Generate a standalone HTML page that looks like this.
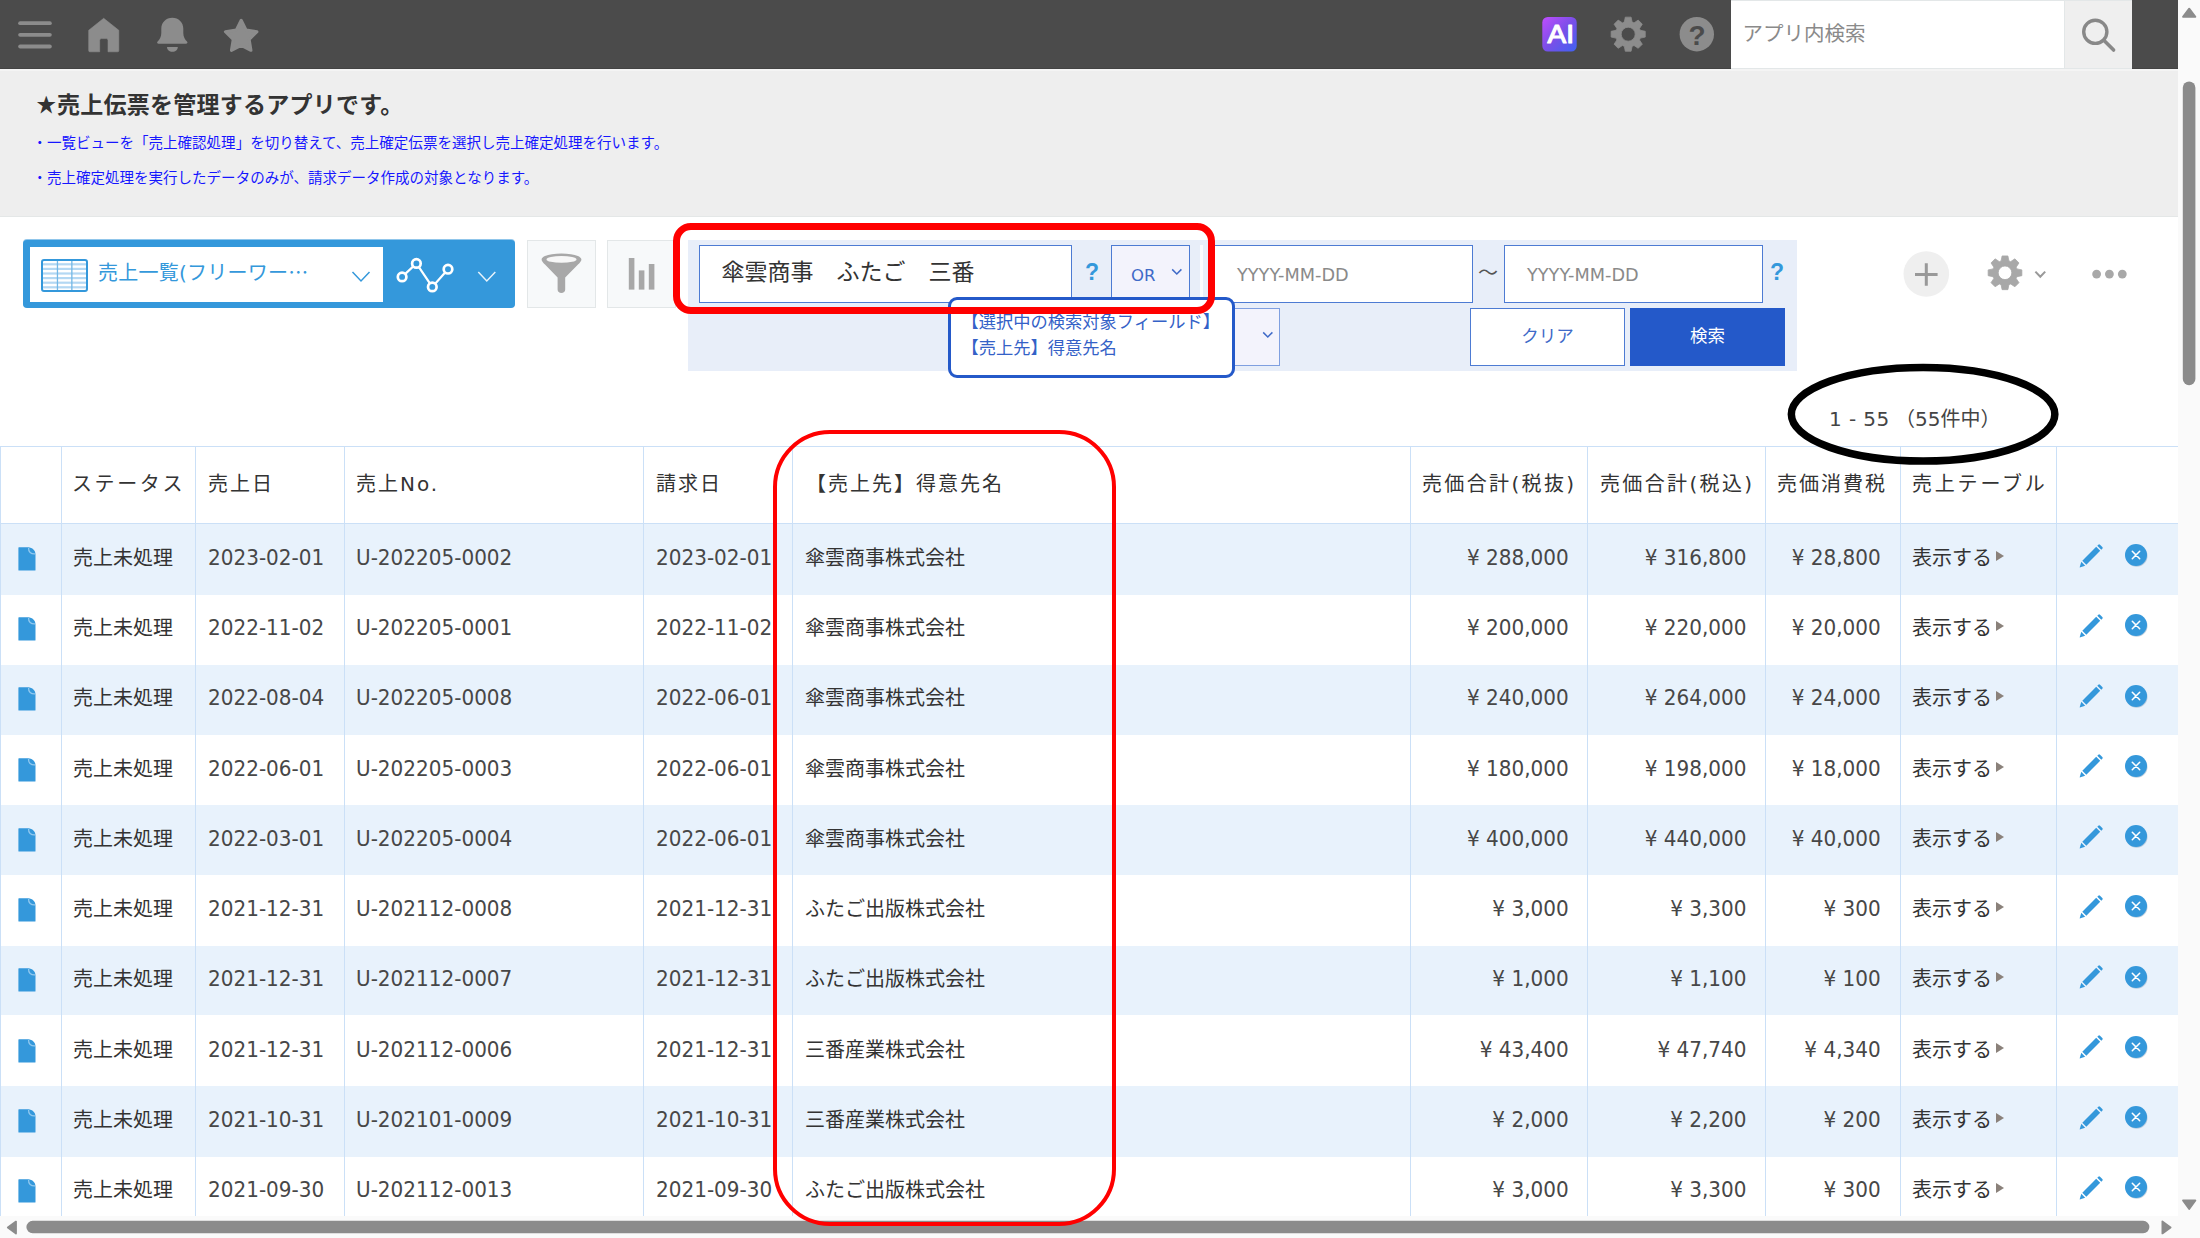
<!DOCTYPE html>
<html lang="ja">
<head>
<meta charset="utf-8">
<title>売上伝票</title>
<style>
*{box-sizing:border-box;margin:0;padding:0}
html,body{width:2200px;height:1238px;overflow:hidden;background:#fff}
body{font-family:"DejaVu Sans", "Liberation Sans", "Noto Sans CJK JP", sans-serif;color:#333;font-size:20px}
#page{position:relative;width:2200px;height:1238px;overflow:hidden;background:#fff}
.abs{position:absolute}
svg{display:block}

/* ---------- top bar ---------- */
#topbar{position:absolute;left:0;top:0;width:2178px;height:69px;background:#4b4b4b;border-bottom:1px solid #434343}
#topbar svg{position:absolute}
#srch{position:absolute;left:1731px;top:0;width:333px;height:69px;background:#fff;border-top:1px solid #e3e7e8;border-bottom:1px solid #e3e7e8;font-size:20.5px;color:#8a8a8a;line-height:66px;padding-left:11.5px}
#srchbtn{position:absolute;left:2064px;top:0;width:68px;height:69px;background:#efefef;border-top:1px solid #e3e7e8;border-bottom:1px solid #e3e7e8;border-left:1px solid #e3e7e8}

/* ---------- scrollbars ---------- */
#vsb{position:absolute;left:2178px;top:0;width:22px;height:1238px;background:#fafafa}
#vsb .th{position:absolute;left:5px;top:81px;width:12px;height:303px;border-radius:6px;background:#8b8b8b}
#hsb{position:absolute;left:0;top:1216px;width:2178px;height:22px;background:#fafafa}
#hsb .th{position:absolute;left:27px;top:5px;width:2123px;height:12px;border-radius:6px;background:#8b8b8b}

/* ---------- announcement ---------- */
#ann{position:absolute;left:0;top:69px;width:2178px;height:148px;background:#eee;border-top:2px solid #f4f4f4;border-bottom:1px solid #e4e7e7}
#ann h1{position:absolute;left:36px;top:13.5px;font-size:23px;letter-spacing:.25px;line-height:40px;font-weight:bold;color:#333;white-space:nowrap;font-family:"Liberation Sans", "Noto Sans CJK JP", sans-serif}
#ann h1 b{display:inline-block;width:21px;font-size:19.5px;vertical-align:1px;text-align:center}
#ann p{position:absolute;left:36px;font-size:14.53px;line-height:24px;color:#1616ff;margin-left:-3.6px;white-space:nowrap;font-family:"Liberation Sans", "Noto Sans CJK JP", sans-serif}

/* ---------- toolbar ---------- */
#viewsel{position:absolute;left:23px;top:240px;width:492px;height:68px;background:#3498db;border-radius:4px;box-shadow:0 -1px 0 rgba(52,152,219,.55)}
#viewsel .in{position:absolute;left:7px;top:7px;width:353px;height:55px;background:#fff}
#viewsel .nm{position:absolute;left:68px;top:0;width:240px;line-height:50px;font-size:20px;letter-spacing:.25px;color:#3498db;white-space:nowrap;overflow:hidden}
.gbtn{position:absolute;top:240px;width:69px;height:68px;background:#f7f9fa;border:1px solid #e3e7e8}
.gbtn svg{position:absolute}

#panel{position:absolute;left:688px;top:240px;width:1109px;height:131px;background:#e8eef9}
.bx{position:absolute;border:1px solid #4d7bd3;background:#fff}
.q{position:absolute;font-family:"Liberation Sans", "Noto Sans CJK JP", sans-serif;font-weight:bold;font-size:23px;line-height:30px;color:#3498db}
.ph{color:#8a8a8a;font-size:17.7px;line-height:58.5px;padding-left:22px;white-space:nowrap}
.sel{background:#f3f3fc}

/* ---------- table ---------- */
#tbl{position:absolute;left:0;top:0;width:2178px;height:1216px;overflow:hidden;pointer-events:none}
.rw{position:absolute;left:0;width:2178px;background:#fff}
.rw.odd{background:#e8f2fc}
.tr{position:absolute;left:0;width:2178px;height:26px}
.c{position:absolute;top:0;line-height:26px;font-size:20px;white-space:nowrap;color:#333}
.c.r{text-align:right}
.c.n{transform:translateY(-.7px) scaleY(1.08);transform-origin:50% 54%;color:#474747}
.c.ic{top:0}
.hd{position:absolute;left:0;width:2178px;background:#fff}
.h{position:absolute;top:25px;line-height:26px;font-size:20px;letter-spacing:2px;white-space:nowrap;color:#333}
.hl{position:absolute;left:0;width:2178px;height:1px;background:#cbe0f7}
.vl{position:absolute;top:446px;width:1px;height:770px;background:#cbe0f7}
.tri{display:inline-block;width:0;height:0;border-left:8px solid #8a817a;border-top:5.7px solid transparent;border-bottom:5.7px solid transparent;margin-left:3.6px;vertical-align:4px}
.doc{position:absolute;left:0;top:2px}
.pen{position:absolute;left:0;top:-1.2px}
.del{position:absolute;left:0;top:-.8px}
</style>
</head>
<body>
<div id="page">
<div id="topbar">
<svg width="2178" height="68" viewBox="0 0 2178 68" style="left:0;top:0">
<rect x="18.2" y="21.3" width="33.6" height="3.8" rx="1.9" fill="#8c8c8c"/><rect x="18.2" y="32.9" width="33.6" height="3.8" rx="1.9" fill="#8c8c8c"/><rect x="18.2" y="44.6" width="33.6" height="3.8" rx="1.9" fill="#8c8c8c"/><path d="M103.7 18.3 L118.8 30.3 V50.6 a1.2 1.2 0 0 1 -1.2 1.2 H108 V40.2 a1.6 1.6 0 0 0 -1.6 -1.6 H101.3 a1.6 1.6 0 0 0 -1.6 1.6 V51.8 H89.9 a1.2 1.2 0 0 1 -1.2 -1.2 V30.3 Z" fill="#8c8c8c" stroke="#8c8c8c" stroke-width="0.6" stroke-linejoin="round"/><path d="M172.3 17.8 C166 17.8 161.3 22.5 161.3 28.8 V33 C161.3 37 159.5 39.5 157.6 41.6 C156.6 42.7 157.3 43.8 158.6 43.8 H186 C187.3 43.8 188 42.7 187 41.6 C185.1 39.5 183.3 37 183.3 33 V28.8 C183.3 22.5 178.6 17.8 172.3 17.8 Z" fill="#8c8c8c"/><path d="M167 47 H177.8 C177.8 50 175.5 51.8 172.4 51.8 C169.3 51.8 167 50 167 47 Z" fill="#8c8c8c"/><path d="M241.20 20.30 L246.14 30.10 L256.99 31.77 L249.19 39.50 L250.96 50.33 L241.20 45.30 L231.44 50.33 L233.21 39.50 L225.41 31.77 L236.26 30.10Z" fill="#8c8c8c" stroke="#8c8c8c" stroke-width="3" stroke-linejoin="round"/><defs><linearGradient id="aig" x1="0" y1="0" x2="1" y2="1"><stop offset="0" stop-color="#c04dff"/><stop offset=".5" stop-color="#7a4fe8"/><stop offset="1" stop-color="#3f62f2"/></linearGradient></defs><rect x="1542.3" y="16.9" width="34.4" height="34.6" rx="5.5" fill="url(#aig)"/><text x="1547.5" y="43.4" font-family="Liberation Sans, sans-serif" font-size="25.5" fill="#fff" stroke="#fff" stroke-width="1.15" stroke-linejoin="round" textLength="26.4" lengthAdjust="spacingAndGlyphs">AI</text><path d="M1624.30 22.11L1625.30 17.14L1631.10 17.14L1632.10 22.11A12.7 12.7 0 0 1 1633.99 22.90L1638.21 20.09L1642.31 24.19L1639.50 28.41A12.7 12.7 0 0 1 1640.29 30.30L1645.26 31.30L1645.26 37.10L1640.29 38.10A12.7 12.7 0 0 1 1639.50 39.99L1642.31 44.21L1638.21 48.31L1633.99 45.50A12.7 12.7 0 0 1 1632.10 46.29L1631.10 51.26L1625.30 51.26L1624.30 46.29A12.7 12.7 0 0 1 1622.41 45.50L1618.19 48.31L1614.09 44.21L1616.90 39.99A12.7 12.7 0 0 1 1616.11 38.10L1611.14 37.10L1611.14 31.30L1616.11 30.30A12.7 12.7 0 0 1 1616.90 28.41L1614.09 24.19L1618.19 20.09L1622.41 22.90A12.7 12.7 0 0 1 1624.30 22.11ZM1621.20 34.2a7.0 7.0 0 1 0 14.0 0a7.0 7.0 0 1 0 -14.0 0Z" fill="#8c8c8c" fill-rule="evenodd" stroke="#8c8c8c" stroke-width="0.8" stroke-linejoin="round"/><circle cx="1696.8" cy="34.2" r="17.2" fill="#8c8c8c"/><text x="1697.1" y="45.3" text-anchor="middle" font-family="Liberation Sans, sans-serif" font-weight="bold" font-size="28" fill="#4b4b4b">?</text>
</svg>
<div id="srch">アプリ内検索</div>
<div id="srchbtn"><svg width="68" height="66" viewBox="0 0 68 66" style="left:0;top:0"><circle cx="30.3" cy="30.8" r="11.6" fill="none" stroke="#888" stroke-width="3.4"/><path d="M38.8 39.3 L48.6 49.1" stroke="#888" stroke-width="3.6" stroke-linecap="round"/></svg></div>
</div>
<div id="vsb"><svg class="abs" width="22" height="1238" viewBox="0 0 22 1238" style="left:0;top:0"><rect x="4.8" y="81.5" width="12.6" height="303.7" rx="6.3" fill="#8b8b8b"/><path d="M11.2 8.6 L17.4 16.8 H5 Z" fill="#8b8b8b" stroke="#8b8b8b" stroke-width="1.8" stroke-linejoin="round"/><path d="M11.2 1209 L17.4 1200.4 H5 Z" fill="#8b8b8b" stroke="#8b8b8b" stroke-width="1.8" stroke-linejoin="round"/></svg></div>
<div id="hsb"><svg class="abs" width="2178" height="22" viewBox="0 0 2178 22" style="left:0;top:0"><rect x="26.4" y="4.8" width="2123" height="12.5" rx="6.25" fill="#8b8b8b"/><path d="M7.8 11.6 L16 5.6 V17.6 Z" fill="#8b8b8b" stroke="#8b8b8b" stroke-width="1.8" stroke-linejoin="round"/><path d="M2170.6 11.4 L2162.4 5.4 V17.4 Z" fill="#8b8b8b" stroke="#8b8b8b" stroke-width="1.8" stroke-linejoin="round"/></svg></div>
<div id="ann"><h1><b>★</b>売上伝票を管理するアプリです。</h1>
<p style="top:60px">・一覧ビューを「売上確認処理」を切り替えて、売上確定伝票を選択し売上確定処理を行います。</p>
<p style="top:95px">・売上確定処理を実行したデータのみが、請求データ作成の対象となります。</p></div>
<div id="viewsel"><div class="in"><svg style="position:absolute;left:10.6px;top:11.6px" width="47" height="33" viewBox="0 0 47 33"><rect x="1" y="1" width="45" height="31" rx="2" fill="#fff" stroke="#3498db" stroke-width="2"/><rect x="2" y="4.2" width="43" height="2.2" fill="#b4d8f3"/><rect x="2" y="8.8" width="43" height="2.2" fill="#b4d8f3"/><rect x="2" y="13.4" width="43" height="2.2" fill="#b4d8f3"/><rect x="2" y="18.0" width="43" height="2.2" fill="#b4d8f3"/><rect x="2" y="22.6" width="43" height="2.2" fill="#b4d8f3"/><rect x="2" y="27.2" width="43" height="2.2" fill="#b4d8f3"/><rect x="15.8" y="2" width="1.3" height="29" fill="#74b8e6"/><rect x="30.2" y="2" width="1.3" height="29" fill="#74b8e6"/></svg><div class="nm">売上一覧(フリーワー<span style="font-family:'Noto Sans CJK JP',sans-serif">…</span></div><svg style="position:absolute;left:320px;top:22px" width="24" height="16" viewBox="0 0 24 16"><path d="M2.5 3 L11 12 L19.5 3" fill="none" stroke="#3498db" stroke-width="1.5"/></svg></div><svg style="position:absolute;left:0;top:0" width="492" height="68" viewBox="0 0 492 68"><path d="M379.1 36.9 L393.4 23.4 L409.3 46.9 L425.0 29.2" fill="none" stroke="#fff" stroke-width="2.2"/><circle cx="379.1" cy="36.9" r="4.3" fill="#3498db" stroke="#fff" stroke-width="2.7"/><circle cx="393.4" cy="23.4" r="4.3" fill="#3498db" stroke="#fff" stroke-width="2.7"/><circle cx="409.3" cy="46.9" r="4.3" fill="#3498db" stroke="#fff" stroke-width="2.7"/><circle cx="425.0" cy="29.2" r="4.3" fill="#3498db" stroke="#fff" stroke-width="2.7"/><path d="M455.3 32 L463.8 41 L472.3 32" fill="none" stroke="#fff" stroke-opacity=".88" stroke-width="1.5"/></svg></div>
<div class="gbtn" style="left:527px"><svg style="left:12px;top:12px" width="44" height="42" viewBox="0 0 44 42"><path d="M1.6 6.5 C1.6 3 10 0.6 21.4 0.6 C32.8 0.6 41.4 3 41.4 6.5 C41.4 8 40 9.6 38 11.6 L25.2 24.6 V36.6 C25.2 38.8 23.6 40 21.4 40 C19.2 40 17.6 38.8 17.6 36.6 V24.6 L5 11.6 C3 9.6 1.6 8 1.6 6.5 Z" fill="#a8a8a8"/><ellipse cx="21.5" cy="6.4" rx="15" ry="3.4" fill="#f7f7f7"/></svg></div>
<div class="gbtn" style="left:607px"><svg style="left:0;top:0" width="69" height="66" viewBox="0 0 69 66"><rect x="20.8" y="17" width="5.6" height="31.6" fill="#a8a8a8"/><rect x="30.8" y="29.4" width="5.6" height="19.2" fill="#a8a8a8"/><rect x="40.8" y="23" width="5.6" height="25.6" fill="#a8a8a8"/></svg></div>
<div id="panel"></div>
<div class="bx" style="left:699px;top:245px;width:373px;height:58px;font-size:23px;line-height:53px;padding-left:21.5px;white-space:nowrap;color:#333;font-family:'Liberation Sans','Noto Sans CJK JP',sans-serif">傘雲商事　ふたご　三番</div>
<div class="q" style="left:1085px;top:257px">?</div>
<div class="bx sel" style="left:1111px;top:245px;width:79px;height:58px;font-size:16.5px;line-height:60px;padding-left:19px;color:#3f6ac8">OR<svg style="position:absolute;left:59px;top:22px" width="12" height="8" viewBox="0 0 12 8"><path d="M1.2 1.4 L5.8 6 L10.4 1.4" fill="none" stroke="#3f6ac8" stroke-width="1.5"/></svg></div>
<div class="abs" style="left:1200px;top:245px;width:3px;height:58px;background:#fbfcfe"></div>
<div class="bx ph" style="left:1212px;top:245px;width:261px;height:58px;padding-left:24px">YYYY-MM-DD</div>
<div class="abs" style="left:1478px;top:258px;font-size:20px;line-height:30px;color:#555;font-family:'Liberation Sans','Noto Sans CJK JP',sans-serif">～</div>
<div class="bx ph" style="left:1504px;top:245px;width:259px;height:58px">YYYY-MM-DD</div>
<div class="q" style="left:1770px;top:257px">?</div>
<div class="bx sel" style="left:1100px;top:308px;width:180px;height:58px;border-color:#7f9fe0"><svg style="position:absolute;left:161px;top:22px" width="12" height="8" viewBox="0 0 12 8"><path d="M1.2 1.4 L5.8 6 L10.4 1.4" fill="none" stroke="#3f6ac8" stroke-width="1.5"/></svg></div>
<div class="bx" style="left:1470px;top:308px;width:155px;height:58px;text-align:center;font-size:17.5px;line-height:54px;color:#3f6ac8">クリア</div>
<div class="abs" style="left:1630px;top:308px;width:155px;height:58px;background:#2459c9;text-align:center;font-size:17.5px;line-height:56px;color:#fff">検索</div>
<svg class="abs" style="left:1890px;top:240px" width="270" height="70" viewBox="1890 240 270 70"><circle cx="1926.3" cy="274" r="22.8" fill="#efefef"/><path d="M1915 274.5 H1937.6 M1926.3 263.2 V285.8" stroke="#999" stroke-width="3" fill="none"/><path d="M2001.10 260.92L2002.10 255.95L2007.90 255.95L2008.90 260.92A12.5 12.5 0 0 1 2010.64 261.64L2014.87 258.83L2018.97 262.93L2016.16 267.16A12.5 12.5 0 0 1 2016.88 268.90L2021.85 269.90L2021.85 275.70L2016.88 276.70A12.5 12.5 0 0 1 2016.16 278.44L2018.97 282.67L2014.87 286.77L2010.64 283.96A12.5 12.5 0 0 1 2008.90 284.68L2007.90 289.65L2002.10 289.65L2001.10 284.68A12.5 12.5 0 0 1 1999.36 283.96L1995.13 286.77L1991.03 282.67L1993.84 278.44A12.5 12.5 0 0 1 1993.12 276.70L1988.15 275.70L1988.15 269.90L1993.12 268.90A12.5 12.5 0 0 1 1993.84 267.16L1991.03 262.93L1995.13 258.83L1999.36 261.64A12.5 12.5 0 0 1 2001.10 260.92ZM1998.20 272.8a6.8 6.8 0 1 0 13.6 0a6.8 6.8 0 1 0 -13.6 0Z" fill="#a8a8a8" fill-rule="evenodd" stroke="#a8a8a8" stroke-width="0.8" stroke-linejoin="round"/><path d="M2035.4 271.6 L2040.3 276.8 L2045.2 271.6" fill="none" stroke="#999" stroke-width="2"/><circle cx="2096.6" cy="274.1" r="4.4" fill="#a8a8a8"/><circle cx="2109.4" cy="274.1" r="4.4" fill="#a8a8a8"/><circle cx="2122.3" cy="274.1" r="4.4" fill="#a8a8a8"/></svg>
<div class="abs" style="left:1829px;top:405px;font-size:20px;line-height:28px;white-space:nowrap;color:#444"><span style="letter-spacing:.4px">1 - 55</span><span style="font-family:'Liberation Sans','Noto Sans CJK JP',sans-serif;margin-left:5.5px">（</span>55件中<span style="font-family:'Liberation Sans','Noto Sans CJK JP',sans-serif">）</span></div>
<div id="tbl">
<div class="rw odd" style="top:524px;height:71px"></div><div class="rw" style="top:595px;height:70px"></div><div class="rw odd" style="top:665px;height:70px"></div><div class="rw" style="top:735px;height:70px"></div><div class="rw odd" style="top:805px;height:70px"></div><div class="rw" style="top:875px;height:71px"></div><div class="rw odd" style="top:946px;height:69px"></div><div class="rw" style="top:1015px;height:71px"></div><div class="rw odd" style="top:1086px;height:71px"></div><div class="rw" style="top:1157px;height:59px"></div>
<div class="tr" style="top:545.00px"><span class="c ic" style="left:18px"><svg class="doc" viewBox="0 0 18 24" width="18" height="24"><path d="M0.9 0.3H10.2C14.4 0.6 17.5 3.4 17.5 7.4V23a.5.5 0 0 1-.5.5H.9a.5.5 0 0 1-.5-.5V.8a.5.5 0 0 1 .5-.5z" fill="#3498db"/><path d="M10.6 1C10.3 4.8 12.8 7.1 17 6.9" fill="none" stroke="#90c8ef" stroke-width="1.3"/></svg></span><span class="c" style="left:73px">売上未処理</span><span class="c n" style="left:208px">2023-02-01</span><span class="c n" style="left:356px">U-202205-0002</span><span class="c n" style="left:656px">2023-02-01</span><span class="c" style="left:805px">傘雲商事株式会社</span><span class="c r n" style="right:609.3px">¥ 288,000</span><span class="c r n" style="right:431.5px">¥ 316,800</span><span class="c r n" style="right:297.29999999999995px">¥ 28,800</span><span class="c" style="left:1912px">表示する<i class="tri"></i></span><span class="c ic" style="left:2079px"><svg class="pen" viewBox="0 0 24 24" width="24" height="24"><path d="M0.6 23.4l1.7-5.6 3.9 3.9z" fill="#3498db"/><path d="M3.3 16.7L17.2 2.8l4 4L7.3 20.7z" fill="#3498db"/><path d="M18.3 1.7l1-1a1.2 1.2 0 0 1 1.7 0l2.3 2.3a1.2 1.2 0 0 1 0 1.7l-1 1z" fill="#3498db"/></svg></span><span class="c ic" style="left:2125px"><svg class="del" viewBox="0 0 24 24" width="24" height="24"><circle cx="11.6" cy="11.9" r="10.9" fill="#8aa9c4" opacity=".55"/><circle cx="11" cy="11" r="11" fill="#3498db"/><path d="M7.3 7.3l7.4 7.4M14.7 7.3l-7.4 7.4" stroke="#fff" stroke-width="1.55" stroke-linecap="round"/></svg></span></div>
<div class="tr" style="top:615.22px"><span class="c ic" style="left:18px"><svg class="doc" viewBox="0 0 18 24" width="18" height="24"><path d="M0.9 0.3H10.2C14.4 0.6 17.5 3.4 17.5 7.4V23a.5.5 0 0 1-.5.5H.9a.5.5 0 0 1-.5-.5V.8a.5.5 0 0 1 .5-.5z" fill="#3498db"/><path d="M10.6 1C10.3 4.8 12.8 7.1 17 6.9" fill="none" stroke="#90c8ef" stroke-width="1.3"/></svg></span><span class="c" style="left:73px">売上未処理</span><span class="c n" style="left:208px">2022-11-02</span><span class="c n" style="left:356px">U-202205-0001</span><span class="c n" style="left:656px">2022-11-02</span><span class="c" style="left:805px">傘雲商事株式会社</span><span class="c r n" style="right:609.3px">¥ 200,000</span><span class="c r n" style="right:431.5px">¥ 220,000</span><span class="c r n" style="right:297.29999999999995px">¥ 20,000</span><span class="c" style="left:1912px">表示する<i class="tri"></i></span><span class="c ic" style="left:2079px"><svg class="pen" viewBox="0 0 24 24" width="24" height="24"><path d="M0.6 23.4l1.7-5.6 3.9 3.9z" fill="#3498db"/><path d="M3.3 16.7L17.2 2.8l4 4L7.3 20.7z" fill="#3498db"/><path d="M18.3 1.7l1-1a1.2 1.2 0 0 1 1.7 0l2.3 2.3a1.2 1.2 0 0 1 0 1.7l-1 1z" fill="#3498db"/></svg></span><span class="c ic" style="left:2125px"><svg class="del" viewBox="0 0 24 24" width="24" height="24"><circle cx="11.6" cy="11.9" r="10.9" fill="#8aa9c4" opacity=".55"/><circle cx="11" cy="11" r="11" fill="#3498db"/><path d="M7.3 7.3l7.4 7.4M14.7 7.3l-7.4 7.4" stroke="#fff" stroke-width="1.55" stroke-linecap="round"/></svg></span></div>
<div class="tr" style="top:685.44px"><span class="c ic" style="left:18px"><svg class="doc" viewBox="0 0 18 24" width="18" height="24"><path d="M0.9 0.3H10.2C14.4 0.6 17.5 3.4 17.5 7.4V23a.5.5 0 0 1-.5.5H.9a.5.5 0 0 1-.5-.5V.8a.5.5 0 0 1 .5-.5z" fill="#3498db"/><path d="M10.6 1C10.3 4.8 12.8 7.1 17 6.9" fill="none" stroke="#90c8ef" stroke-width="1.3"/></svg></span><span class="c" style="left:73px">売上未処理</span><span class="c n" style="left:208px">2022-08-04</span><span class="c n" style="left:356px">U-202205-0008</span><span class="c n" style="left:656px">2022-06-01</span><span class="c" style="left:805px">傘雲商事株式会社</span><span class="c r n" style="right:609.3px">¥ 240,000</span><span class="c r n" style="right:431.5px">¥ 264,000</span><span class="c r n" style="right:297.29999999999995px">¥ 24,000</span><span class="c" style="left:1912px">表示する<i class="tri"></i></span><span class="c ic" style="left:2079px"><svg class="pen" viewBox="0 0 24 24" width="24" height="24"><path d="M0.6 23.4l1.7-5.6 3.9 3.9z" fill="#3498db"/><path d="M3.3 16.7L17.2 2.8l4 4L7.3 20.7z" fill="#3498db"/><path d="M18.3 1.7l1-1a1.2 1.2 0 0 1 1.7 0l2.3 2.3a1.2 1.2 0 0 1 0 1.7l-1 1z" fill="#3498db"/></svg></span><span class="c ic" style="left:2125px"><svg class="del" viewBox="0 0 24 24" width="24" height="24"><circle cx="11.6" cy="11.9" r="10.9" fill="#8aa9c4" opacity=".55"/><circle cx="11" cy="11" r="11" fill="#3498db"/><path d="M7.3 7.3l7.4 7.4M14.7 7.3l-7.4 7.4" stroke="#fff" stroke-width="1.55" stroke-linecap="round"/></svg></span></div>
<div class="tr" style="top:755.66px"><span class="c ic" style="left:18px"><svg class="doc" viewBox="0 0 18 24" width="18" height="24"><path d="M0.9 0.3H10.2C14.4 0.6 17.5 3.4 17.5 7.4V23a.5.5 0 0 1-.5.5H.9a.5.5 0 0 1-.5-.5V.8a.5.5 0 0 1 .5-.5z" fill="#3498db"/><path d="M10.6 1C10.3 4.8 12.8 7.1 17 6.9" fill="none" stroke="#90c8ef" stroke-width="1.3"/></svg></span><span class="c" style="left:73px">売上未処理</span><span class="c n" style="left:208px">2022-06-01</span><span class="c n" style="left:356px">U-202205-0003</span><span class="c n" style="left:656px">2022-06-01</span><span class="c" style="left:805px">傘雲商事株式会社</span><span class="c r n" style="right:609.3px">¥ 180,000</span><span class="c r n" style="right:431.5px">¥ 198,000</span><span class="c r n" style="right:297.29999999999995px">¥ 18,000</span><span class="c" style="left:1912px">表示する<i class="tri"></i></span><span class="c ic" style="left:2079px"><svg class="pen" viewBox="0 0 24 24" width="24" height="24"><path d="M0.6 23.4l1.7-5.6 3.9 3.9z" fill="#3498db"/><path d="M3.3 16.7L17.2 2.8l4 4L7.3 20.7z" fill="#3498db"/><path d="M18.3 1.7l1-1a1.2 1.2 0 0 1 1.7 0l2.3 2.3a1.2 1.2 0 0 1 0 1.7l-1 1z" fill="#3498db"/></svg></span><span class="c ic" style="left:2125px"><svg class="del" viewBox="0 0 24 24" width="24" height="24"><circle cx="11.6" cy="11.9" r="10.9" fill="#8aa9c4" opacity=".55"/><circle cx="11" cy="11" r="11" fill="#3498db"/><path d="M7.3 7.3l7.4 7.4M14.7 7.3l-7.4 7.4" stroke="#fff" stroke-width="1.55" stroke-linecap="round"/></svg></span></div>
<div class="tr" style="top:825.88px"><span class="c ic" style="left:18px"><svg class="doc" viewBox="0 0 18 24" width="18" height="24"><path d="M0.9 0.3H10.2C14.4 0.6 17.5 3.4 17.5 7.4V23a.5.5 0 0 1-.5.5H.9a.5.5 0 0 1-.5-.5V.8a.5.5 0 0 1 .5-.5z" fill="#3498db"/><path d="M10.6 1C10.3 4.8 12.8 7.1 17 6.9" fill="none" stroke="#90c8ef" stroke-width="1.3"/></svg></span><span class="c" style="left:73px">売上未処理</span><span class="c n" style="left:208px">2022-03-01</span><span class="c n" style="left:356px">U-202205-0004</span><span class="c n" style="left:656px">2022-06-01</span><span class="c" style="left:805px">傘雲商事株式会社</span><span class="c r n" style="right:609.3px">¥ 400,000</span><span class="c r n" style="right:431.5px">¥ 440,000</span><span class="c r n" style="right:297.29999999999995px">¥ 40,000</span><span class="c" style="left:1912px">表示する<i class="tri"></i></span><span class="c ic" style="left:2079px"><svg class="pen" viewBox="0 0 24 24" width="24" height="24"><path d="M0.6 23.4l1.7-5.6 3.9 3.9z" fill="#3498db"/><path d="M3.3 16.7L17.2 2.8l4 4L7.3 20.7z" fill="#3498db"/><path d="M18.3 1.7l1-1a1.2 1.2 0 0 1 1.7 0l2.3 2.3a1.2 1.2 0 0 1 0 1.7l-1 1z" fill="#3498db"/></svg></span><span class="c ic" style="left:2125px"><svg class="del" viewBox="0 0 24 24" width="24" height="24"><circle cx="11.6" cy="11.9" r="10.9" fill="#8aa9c4" opacity=".55"/><circle cx="11" cy="11" r="11" fill="#3498db"/><path d="M7.3 7.3l7.4 7.4M14.7 7.3l-7.4 7.4" stroke="#fff" stroke-width="1.55" stroke-linecap="round"/></svg></span></div>
<div class="tr" style="top:896.10px"><span class="c ic" style="left:18px"><svg class="doc" viewBox="0 0 18 24" width="18" height="24"><path d="M0.9 0.3H10.2C14.4 0.6 17.5 3.4 17.5 7.4V23a.5.5 0 0 1-.5.5H.9a.5.5 0 0 1-.5-.5V.8a.5.5 0 0 1 .5-.5z" fill="#3498db"/><path d="M10.6 1C10.3 4.8 12.8 7.1 17 6.9" fill="none" stroke="#90c8ef" stroke-width="1.3"/></svg></span><span class="c" style="left:73px">売上未処理</span><span class="c n" style="left:208px">2021-12-31</span><span class="c n" style="left:356px">U-202112-0008</span><span class="c n" style="left:656px">2021-12-31</span><span class="c" style="left:805px">ふたご出版株式会社</span><span class="c r n" style="right:609.3px">¥ 3,000</span><span class="c r n" style="right:431.5px">¥ 3,300</span><span class="c r n" style="right:297.29999999999995px">¥ 300</span><span class="c" style="left:1912px">表示する<i class="tri"></i></span><span class="c ic" style="left:2079px"><svg class="pen" viewBox="0 0 24 24" width="24" height="24"><path d="M0.6 23.4l1.7-5.6 3.9 3.9z" fill="#3498db"/><path d="M3.3 16.7L17.2 2.8l4 4L7.3 20.7z" fill="#3498db"/><path d="M18.3 1.7l1-1a1.2 1.2 0 0 1 1.7 0l2.3 2.3a1.2 1.2 0 0 1 0 1.7l-1 1z" fill="#3498db"/></svg></span><span class="c ic" style="left:2125px"><svg class="del" viewBox="0 0 24 24" width="24" height="24"><circle cx="11.6" cy="11.9" r="10.9" fill="#8aa9c4" opacity=".55"/><circle cx="11" cy="11" r="11" fill="#3498db"/><path d="M7.3 7.3l7.4 7.4M14.7 7.3l-7.4 7.4" stroke="#fff" stroke-width="1.55" stroke-linecap="round"/></svg></span></div>
<div class="tr" style="top:966.32px"><span class="c ic" style="left:18px"><svg class="doc" viewBox="0 0 18 24" width="18" height="24"><path d="M0.9 0.3H10.2C14.4 0.6 17.5 3.4 17.5 7.4V23a.5.5 0 0 1-.5.5H.9a.5.5 0 0 1-.5-.5V.8a.5.5 0 0 1 .5-.5z" fill="#3498db"/><path d="M10.6 1C10.3 4.8 12.8 7.1 17 6.9" fill="none" stroke="#90c8ef" stroke-width="1.3"/></svg></span><span class="c" style="left:73px">売上未処理</span><span class="c n" style="left:208px">2021-12-31</span><span class="c n" style="left:356px">U-202112-0007</span><span class="c n" style="left:656px">2021-12-31</span><span class="c" style="left:805px">ふたご出版株式会社</span><span class="c r n" style="right:609.3px">¥ 1,000</span><span class="c r n" style="right:431.5px">¥ 1,100</span><span class="c r n" style="right:297.29999999999995px">¥ 100</span><span class="c" style="left:1912px">表示する<i class="tri"></i></span><span class="c ic" style="left:2079px"><svg class="pen" viewBox="0 0 24 24" width="24" height="24"><path d="M0.6 23.4l1.7-5.6 3.9 3.9z" fill="#3498db"/><path d="M3.3 16.7L17.2 2.8l4 4L7.3 20.7z" fill="#3498db"/><path d="M18.3 1.7l1-1a1.2 1.2 0 0 1 1.7 0l2.3 2.3a1.2 1.2 0 0 1 0 1.7l-1 1z" fill="#3498db"/></svg></span><span class="c ic" style="left:2125px"><svg class="del" viewBox="0 0 24 24" width="24" height="24"><circle cx="11.6" cy="11.9" r="10.9" fill="#8aa9c4" opacity=".55"/><circle cx="11" cy="11" r="11" fill="#3498db"/><path d="M7.3 7.3l7.4 7.4M14.7 7.3l-7.4 7.4" stroke="#fff" stroke-width="1.55" stroke-linecap="round"/></svg></span></div>
<div class="tr" style="top:1036.54px"><span class="c ic" style="left:18px"><svg class="doc" viewBox="0 0 18 24" width="18" height="24"><path d="M0.9 0.3H10.2C14.4 0.6 17.5 3.4 17.5 7.4V23a.5.5 0 0 1-.5.5H.9a.5.5 0 0 1-.5-.5V.8a.5.5 0 0 1 .5-.5z" fill="#3498db"/><path d="M10.6 1C10.3 4.8 12.8 7.1 17 6.9" fill="none" stroke="#90c8ef" stroke-width="1.3"/></svg></span><span class="c" style="left:73px">売上未処理</span><span class="c n" style="left:208px">2021-12-31</span><span class="c n" style="left:356px">U-202112-0006</span><span class="c n" style="left:656px">2021-12-31</span><span class="c" style="left:805px">三番産業株式会社</span><span class="c r n" style="right:609.3px">¥ 43,400</span><span class="c r n" style="right:431.5px">¥ 47,740</span><span class="c r n" style="right:297.29999999999995px">¥ 4,340</span><span class="c" style="left:1912px">表示する<i class="tri"></i></span><span class="c ic" style="left:2079px"><svg class="pen" viewBox="0 0 24 24" width="24" height="24"><path d="M0.6 23.4l1.7-5.6 3.9 3.9z" fill="#3498db"/><path d="M3.3 16.7L17.2 2.8l4 4L7.3 20.7z" fill="#3498db"/><path d="M18.3 1.7l1-1a1.2 1.2 0 0 1 1.7 0l2.3 2.3a1.2 1.2 0 0 1 0 1.7l-1 1z" fill="#3498db"/></svg></span><span class="c ic" style="left:2125px"><svg class="del" viewBox="0 0 24 24" width="24" height="24"><circle cx="11.6" cy="11.9" r="10.9" fill="#8aa9c4" opacity=".55"/><circle cx="11" cy="11" r="11" fill="#3498db"/><path d="M7.3 7.3l7.4 7.4M14.7 7.3l-7.4 7.4" stroke="#fff" stroke-width="1.55" stroke-linecap="round"/></svg></span></div>
<div class="tr" style="top:1106.76px"><span class="c ic" style="left:18px"><svg class="doc" viewBox="0 0 18 24" width="18" height="24"><path d="M0.9 0.3H10.2C14.4 0.6 17.5 3.4 17.5 7.4V23a.5.5 0 0 1-.5.5H.9a.5.5 0 0 1-.5-.5V.8a.5.5 0 0 1 .5-.5z" fill="#3498db"/><path d="M10.6 1C10.3 4.8 12.8 7.1 17 6.9" fill="none" stroke="#90c8ef" stroke-width="1.3"/></svg></span><span class="c" style="left:73px">売上未処理</span><span class="c n" style="left:208px">2021-10-31</span><span class="c n" style="left:356px">U-202101-0009</span><span class="c n" style="left:656px">2021-10-31</span><span class="c" style="left:805px">三番産業株式会社</span><span class="c r n" style="right:609.3px">¥ 2,000</span><span class="c r n" style="right:431.5px">¥ 2,200</span><span class="c r n" style="right:297.29999999999995px">¥ 200</span><span class="c" style="left:1912px">表示する<i class="tri"></i></span><span class="c ic" style="left:2079px"><svg class="pen" viewBox="0 0 24 24" width="24" height="24"><path d="M0.6 23.4l1.7-5.6 3.9 3.9z" fill="#3498db"/><path d="M3.3 16.7L17.2 2.8l4 4L7.3 20.7z" fill="#3498db"/><path d="M18.3 1.7l1-1a1.2 1.2 0 0 1 1.7 0l2.3 2.3a1.2 1.2 0 0 1 0 1.7l-1 1z" fill="#3498db"/></svg></span><span class="c ic" style="left:2125px"><svg class="del" viewBox="0 0 24 24" width="24" height="24"><circle cx="11.6" cy="11.9" r="10.9" fill="#8aa9c4" opacity=".55"/><circle cx="11" cy="11" r="11" fill="#3498db"/><path d="M7.3 7.3l7.4 7.4M14.7 7.3l-7.4 7.4" stroke="#fff" stroke-width="1.55" stroke-linecap="round"/></svg></span></div>
<div class="tr" style="top:1176.98px"><span class="c ic" style="left:18px"><svg class="doc" viewBox="0 0 18 24" width="18" height="24"><path d="M0.9 0.3H10.2C14.4 0.6 17.5 3.4 17.5 7.4V23a.5.5 0 0 1-.5.5H.9a.5.5 0 0 1-.5-.5V.8a.5.5 0 0 1 .5-.5z" fill="#3498db"/><path d="M10.6 1C10.3 4.8 12.8 7.1 17 6.9" fill="none" stroke="#90c8ef" stroke-width="1.3"/></svg></span><span class="c" style="left:73px">売上未処理</span><span class="c n" style="left:208px">2021-09-30</span><span class="c n" style="left:356px">U-202112-0013</span><span class="c n" style="left:656px">2021-09-30</span><span class="c" style="left:805px">ふたご出版株式会社</span><span class="c r n" style="right:609.3px">¥ 3,000</span><span class="c r n" style="right:431.5px">¥ 3,300</span><span class="c r n" style="right:297.29999999999995px">¥ 300</span><span class="c" style="left:1912px">表示する<i class="tri"></i></span><span class="c ic" style="left:2079px"><svg class="pen" viewBox="0 0 24 24" width="24" height="24"><path d="M0.6 23.4l1.7-5.6 3.9 3.9z" fill="#3498db"/><path d="M3.3 16.7L17.2 2.8l4 4L7.3 20.7z" fill="#3498db"/><path d="M18.3 1.7l1-1a1.2 1.2 0 0 1 1.7 0l2.3 2.3a1.2 1.2 0 0 1 0 1.7l-1 1z" fill="#3498db"/></svg></span><span class="c ic" style="left:2125px"><svg class="del" viewBox="0 0 24 24" width="24" height="24"><circle cx="11.6" cy="11.9" r="10.9" fill="#8aa9c4" opacity=".55"/><circle cx="11" cy="11" r="11" fill="#3498db"/><path d="M7.3 7.3l7.4 7.4M14.7 7.3l-7.4 7.4" stroke="#fff" stroke-width="1.55" stroke-linecap="round"/></svg></span></div>
<div class="hd" style="top:446px;height:77px"><span class="h" style="left:72px;letter-spacing:2.6px">ステータス</span><span class="h" style="left:208px;letter-spacing:2px">売上日</span><span class="h" style="left:356px;letter-spacing:2px">売上No.</span><span class="h" style="left:656px;letter-spacing:2px">請求日</span><span class="h" style="left:806px;letter-spacing:2px">【売上先】得意先名</span><span class="h" style="left:1422px;letter-spacing:2.35px">売価合計(税抜)</span><span class="h" style="left:1600px;letter-spacing:2.35px">売価合計(税込)</span><span class="h" style="left:1777px;letter-spacing:2px">売価消費税</span><span class="h" style="left:1912px;letter-spacing:2.8px">売上テーブル</span></div>
<div class="hl" style="top:446px"></div><div class="hl" style="top:523px"></div>
<div class="vl" style="left:0px"></div><div class="vl" style="left:61px"></div><div class="vl" style="left:195px"></div><div class="vl" style="left:344px"></div><div class="vl" style="left:643px"></div><div class="vl" style="left:792px"></div><div class="vl" style="left:1410px"></div><div class="vl" style="left:1587px"></div><div class="vl" style="left:1765px"></div><div class="vl" style="left:1900px"></div><div class="vl" style="left:2056px"></div>
</div>
<div class="abs" style="left:948px;top:297px;width:287px;height:81px;border:3px solid #2459c9;border-radius:9px;background:#fff;font-size:17.25px;line-height:26.2px;color:#3461c7;padding:9.2px 0 0 10.5px;white-space:nowrap;font-family:'Liberation Sans','Noto Sans CJK JP',sans-serif">【選択中の検索対象フィールド】<br>【売上先】得意先名</div>
<div class="abs" style="left:673px;top:223px;width:542px;height:90.5px;border:7px solid #f00;border-radius:18px"></div>
<div class="abs" style="left:773px;top:430px;width:343px;height:796px;border:4px solid #f00;border-radius:57px"></div>
<svg class="abs" style="left:1780px;top:355px" width="290" height="120" viewBox="1780 355 290 120"><ellipse cx="1923.1" cy="414.25" rx="131.75" ry="46.8" fill="none" stroke="#000" stroke-width="7.5"/></svg>
</div>
</body>
</html>
